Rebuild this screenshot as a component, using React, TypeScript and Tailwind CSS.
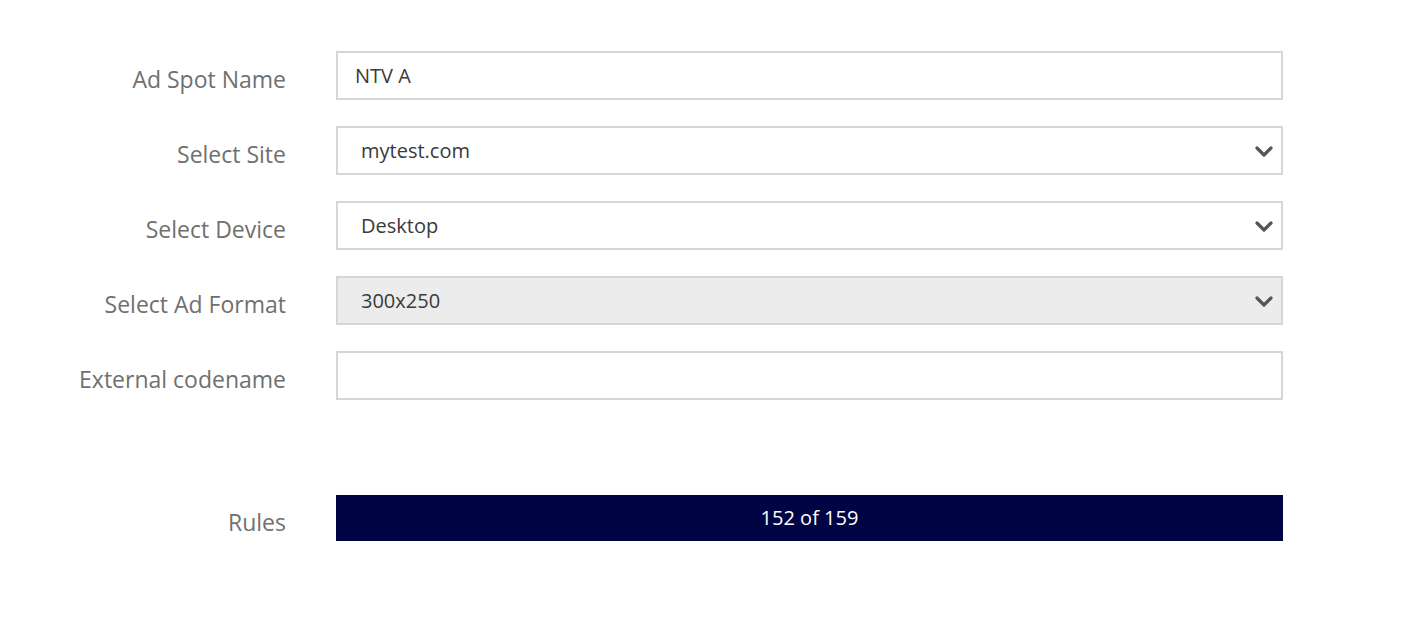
import React from 'react';

const ChevronDown: React.FC = () => (
  <svg width="20" height="14" viewBox="0 0 20 14" fill="none" className="shrink-0">
    <path d="M3 4l7 7 7-7" stroke="#555" strokeWidth="3.2" strokeLinecap="round" strokeLinejoin="round" />
  </svg>
);

interface RowProps {
  label: string;
  children: React.ReactNode;
}

const Row: React.FC<RowProps> = ({ label, children }) => (
  <div className="flex items-center gap-[50px]">
    <label className="w-[286px] shrink-0 pt-[8px] text-right text-[23px] text-[#707070]">{label}</label>
    {children}
  </div>
);

const SelectBox: React.FC<{ value: string; disabled?: boolean }> = ({ value, disabled }) => (
  <div
    className={`flex h-[49px] w-[947px] items-center justify-between border-2 border-[#d6d6d6] pl-[23px] pr-[7px] text-[20px] text-[#3a3a3a] ${
      disabled ? 'bg-[#ececec]' : 'bg-white'
    }`}
  >
    <span>{value}</span>
    <ChevronDown />
  </div>
);

export default function App() {
  return (
    <div className="min-h-screen bg-white pt-[51px] font-['Open_Sans',sans-serif]">
      <div className="flex flex-col gap-[26px]">
        <Row label="Ad Spot Name">
          <div className="flex h-[49px] w-[947px] items-center border-2 border-[#d6d6d6] bg-white pl-[17px] text-[20px] text-[#3a3a3a]">
            NTV A
          </div>
        </Row>
        <Row label="Select Site">
          <SelectBox value="mytest.com" />
        </Row>
        <Row label="Select Device">
          <SelectBox value="Desktop" />
        </Row>
        <Row label="Select Ad Format">
          <SelectBox value="300x250" disabled />
        </Row>
        <Row label="External codename">
          <div className="h-[49px] w-[947px] border-2 border-[#d6d6d6] bg-white" />
        </Row>
      </div>
      <div className="mt-[95px]">
        <Row label="Rules">
          <div className="flex h-[46px] w-[947px] items-center justify-center bg-[#000445] text-[20px] text-white">
            152 of 159
          </div>
        </Row>
      </div>
    </div>
  );
}
